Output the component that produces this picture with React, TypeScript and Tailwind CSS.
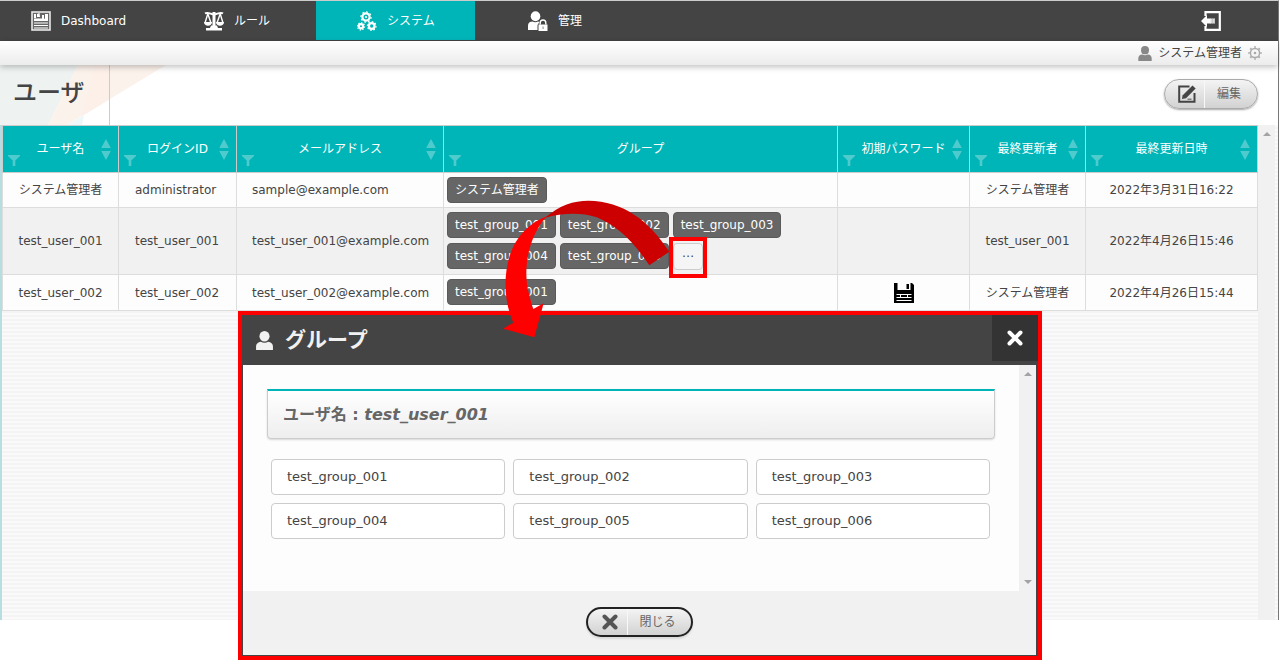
import React from "react";

type Column = { label: string; width: string; sortable: boolean };

const columns: Column[] = [
  { label: "ユーザ名", width: "w-[117px]", sortable: true },
  { label: "ログインID", width: "w-[118px]", sortable: true },
  { label: "メールアドレス", width: "w-[207px]", sortable: true },
  { label: "グループ", width: "", sortable: false },
  { label: "初期パスワード", width: "w-[132px]", sortable: true },
  { label: "最終更新者", width: "w-[116px]", sortable: true },
  { label: "最終更新日時", width: "w-[172px]", sortable: true },
];

type User = {
  name: string;
  login: string;
  mail: string;
  groups: string[];
  more?: boolean;
  password?: boolean;
  updatedBy: string;
  updatedAt: string;
  row: string;
};

const users: User[] = [
  {
    name: "システム管理者",
    login: "administrator",
    mail: "sample@example.com",
    groups: ["システム管理者"],
    updatedBy: "システム管理者",
    updatedAt: "2022年3月31日16:22",
    row: "h-[35px] bg-[#fdfdfd]",
  },
  {
    name: "test_user_001",
    login: "test_user_001",
    mail: "test_user_001@example.com",
    groups: ["test_group_001", "test_group_002", "test_group_003", "test_group_004", "test_group_005"],
    more: true,
    updatedBy: "test_user_001",
    updatedAt: "2022年4月26日15:46",
    row: "h-[67px] bg-[#f1f1f1]",
  },
  {
    name: "test_user_002",
    login: "test_user_002",
    mail: "test_user_002@example.com",
    groups: ["test_group_001"],
    password: true,
    updatedBy: "システム管理者",
    updatedAt: "2022年4月26日15:44",
    row: "h-[36px] bg-[#fdfdfd]",
  },
];

const modalGroups = [
  "test_group_001",
  "test_group_002",
  "test_group_003",
  "test_group_004",
  "test_group_005",
  "test_group_006",
];

function DashboardIcon() {
  return (
    <svg viewBox="0 0 20 20" className="size-5" fill="none">
      <rect x="1" y="1" width="18" height="18" fill="#666" stroke="#e8e8e8" strokeWidth="1.6" />
      <path d="M3 3h2v4H3zM6 3l2.500-1 .500 4H6zM11 4h2v5h-2zM14 3h3v6h-3z" fill="#fff" />
      <path d="M3 7.500h7L17 8v2H3z" fill="#fff" />
      <path d="M3 12h14M3 14.500h14M3 17h14" stroke="#fff" strokeWidth="1.1" />
    </svg>
  );
}

function ScalesIcon() {
  return (
    <svg viewBox="0 0 20 20" className="size-5" fill="none" stroke="#fff">
      <path d="M1 2.400c3-1.800 6 1 9 1s6-2.800 9-1" strokeWidth="2" />
      <path d="M10 1v16" strokeWidth="3" />
      <path d="M3.800 2.800L1 12M3.800 2.800L7 12M16.200 2.800L13 12M16.200 2.800L19 12" strokeWidth="1.400" />
      <path d="M0 11h8c0 5-8 5-8 0zM12 11h8c0 5-8 5-8 0z" fill="#fff" stroke="none" />
      <path d="M7 14.500h6l1 2.500h4v2.500H2V17h4z" fill="#fff" stroke="none" />
    </svg>
  );
}

function Cog({ x, y, r }: { x: number; y: number; r: number }) {
  return (
    <g>
      <circle cx={x} cy={y} r={r} strokeWidth="2.200" />
      <circle cx={x} cy={y} r={r + 1.5} strokeWidth="1.200" pathLength="32" strokeDasharray="2 2" />
    </g>
  );
}

function CogsIcon() {
  return (
    <svg viewBox="0 0 20 20" className="size-5" fill="none" stroke="#fff">
      <Cog x={9} y={6} r={3.6} />
      <circle cx="9" cy="6" r="1.100" fill="#fff" stroke="none" />
      <Cog x={4} y={15.3} r={2.1} />
      <Cog x={14.7} y={15} r={2.8} />
    </svg>
  );
}

function UserLockIcon() {
  return (
    <svg viewBox="0 0 20 20" className="size-5" fill="#fff">
      <ellipse cx="7.500" cy="5.200" rx="4.800" ry="5" />
      <path d="M0 19v-4.500c0-2.500 2-4 4.500-4 1.500 1 4 1 5.500 0l1.500.5-2 3v5z" />
      <path d="M10.500 13.500h9v6.500h-9z" />
      <path d="M12.200 13.500v-1.700a2.800 2.800 0 0 1 5.600 0v1.700" fill="none" stroke="#fff" strokeWidth="1.400" />
      <path d="M14.500 15.500h1.200v2.500h-1.200z" fill="#999" />
    </svg>
  );
}

function PersonIcon({ className }: { className: string }) {
  return (
    <svg viewBox="0 0 16 18" className={className} fill="currentColor">
      <ellipse cx="8" cy="5" rx="4.800" ry="5" />
      <path d="M0 18v-3.500C0 12 2 10.500 4.500 10.200c2 1.300 5 1.300 7 0C14 10.500 16 12 16 14.500V18z" />
    </svg>
  );
}

function LogoutIcon() {
  return (
    <svg viewBox="0 0 20 20" className="size-5">
      <path d="M4.500 5V1.200h14.300v17.600H4.500V15" fill="none" stroke="#fff" strokeWidth="2.200" />
      <path d="M0 10l6-6v3.500h4v5H6V16z" fill="#fff" />
      <path d="M9.500 7.500H14v5H9.500z" fill="#ddd" />
      <path d="M11.500 7.500v5M13.500 7.500v5" stroke="#bbb" strokeWidth="0.600" />
    </svg>
  );
}

function SettingsIcon() {
  return (
    <svg viewBox="0 0 14 14" className="size-[14px]" fill="none" stroke="#aaa">
      <circle cx="7" cy="7" r="4.600" strokeWidth="1.500" />
      <circle cx="7" cy="7" r="6" strokeWidth="1.400" pathLength="32" strokeDasharray="1.600 2.400" strokeDashoffset="0.800" />
      <circle cx="7" cy="7" r="1.300" fill="#aaa" stroke="none" />
    </svg>
  );
}

function EditIcon() {
  return (
    <svg viewBox="0 0 18 18" className="size-[18px]">
      <path d="M11.500 1.500H1.200v15.300h15.300V8" fill="none" stroke="#444" strokeWidth="2" />
      <path d="M4.500 10.500L14.500.5l3.200 3L8 13.300l-4 .8z" fill="#444" />
      <path d="M9.500 14.200h4" stroke="#666" strokeWidth="1.200" />
    </svg>
  );
}

function CrossIcon({ className }: { className: string }) {
  return (
    <svg viewBox="0 0 16 16" className={className} fill="none" stroke="currentColor" strokeWidth="4" strokeLinecap="round">
      <path d="M2.500 2.500l11 11M13.500 2.500l-11 11" />
    </svg>
  );
}

function SaveIcon() {
  return (
    <svg viewBox="0 0 20 20" className="mx-auto size-5">
      <path d="M0 0h3.500v7h13V0H18l2 2v18H0z" fill="#000" />
      <path d="M12.500 1H15v5h-2.500z" fill="#000" />
      <path d="M2.500 11.500h15M2.500 14.500h15M2.500 17.500h15" stroke="#fff" strokeWidth="1" />
      <path d="M6.500 11v4M13.500 11v4" stroke="#fff" strokeWidth="1" />
    </svg>
  );
}

function FilterIcon() {
  return (
    <svg viewBox="0 0 12 11" className="h-[11px] w-3" fill="#4fcbce">
      <path d="M0 0h12v1L7.300 5.500V11H4.700V5.500L0 1z" />
    </svg>
  );
}

function SortIcon() {
  return (
    <svg viewBox="0 0 10 21" className="h-[21px] w-[10px]" fill="#4fcbce">
      <path d="M5 0l4.800 9H.2zM.2 12h9.600L5 21z" />
    </svg>
  );
}

const navItems = [
  { label: "Dashboard", icon: <DashboardIcon />, className: "w-[158px] pl-[31px]" },
  { label: "ルール", icon: <ScalesIcon />, className: "w-[158px] pl-[46px]" },
  { label: "システム", icon: <CogsIcon />, className: "w-[159px] pl-[41px] bg-[#00b5b8]" },
  { label: "管理", icon: <UserLockIcon />, className: "w-[159px] pl-[53px]" },
];

function PillButton({ icon, label, className }: { icon: React.ReactNode; label: string; className: string }) {
  return (
    <button
      type="button"
      className={`flex h-[30px] items-stretch rounded-full bg-linear-to-b from-[#f4f4f4] to-[#d2d2d2] text-xs text-[#666] ${className}`}
    >
      <span className="flex w-10 items-center justify-center border-r border-[#f8f8f8] pl-1">{icon}</span>
      <span className="flex flex-1 items-center justify-center pr-1">{label}</span>
    </button>
  );
}

function GroupDialog() {
  return (
    <section
      role="dialog"
      aria-labelledby="dialog-title"
      className="absolute top-[311px] left-1/2 z-20 w-[804px] -translate-x-1/2 border-4 border-[#f00] bg-[#444]"
    >
      <header className="flex h-[50px] items-start justify-between text-white">
        <h2 id="dialog-title" className="flex h-[50px] items-center gap-3 pl-[14px] text-[21px] font-bold text-[#f1f1f1]">
          <PersonIcon className="h-[19px] w-[17px]" />
          グループ
        </h2>
        <button type="button" aria-label="ダイアログを閉じる" className="flex size-[46px] items-center justify-center bg-[#333]">
          <CrossIcon className="size-4" />
        </button>
      </header>
      <div className="mr-0.5 mb-px ml-px">
        <div className="flex h-[226px] bg-[#fdfdfd]">
          <div className="flex-1 px-6 pt-6">
            <h3 className="h-[50px] rounded-b border border-t-2 border-[#ccc] border-t-[#00b5b8] bg-linear-to-b from-white to-[#eee] pl-[15px] text-base leading-[48px] font-bold text-[#666] shadow-[0_1px_2px_rgba(0,0,0,0.15)]">
              ユーザ名 : <em>test_user_001</em>
            </h3>
            <ul className="mt-5 grid grid-cols-3 gap-2 pr-[5px] pl-1">
              {modalGroups.map((group) => (
                <li key={group} className="h-9 rounded border border-[#ccc] bg-white pl-[15px] text-[13px] leading-[34px]">
                  {group}
                </li>
              ))}
            </ul>
          </div>
          <div className="flex w-[17px] flex-col items-center justify-between bg-[#f1f1f1] py-[7px]">
            <svg viewBox="0 0 8 4" className="h-1 w-2" fill="#a3a3a3"><path d="M4 0l4 4H0z" /></svg>
            <svg viewBox="0 0 8 4" className="h-1 w-2" fill="#a3a3a3"><path d="M4 4l4-4H0z" /></svg>
          </div>
        </div>
        <footer className="flex h-16 items-center justify-center bg-[#f1f1f1] pb-0.5">
          <PillButton
            icon={<CrossIcon className="size-4 text-[#555]" />}
            label="閉じる"
            className="w-[107px] border-2 border-[#222] shadow-[0_2px_2px_rgba(0,0,0,0.1)]"
          />
        </footer>
      </div>
      <svg viewBox="210 84 516 420" className="pointer-events-none absolute -top-[117px] left-[258px] h-[140px] w-[172px]">
        <path
          d="M718 245L658 286C604 205 555 165 500 142C450 125 395 130 345 143C390 105 430 92 475 92C580 94 655 150 718 245z"
          fill="#c00"
        />
        <path
          d="M352 138C300 190 275 290 297 372C301 390 305 403 310 417L341 400L313 502L219 476L250 458C222 395 220 320 239 258C258 200 295 160 352 138z"
          fill="#f00"
        />
      </svg>
    </section>
  );
}

export default function App() {
  return (
    <div className="relative flex h-screen flex-col bg-white pb-10 font-['DejaVu_Sans','Noto_Sans_CJK_JP',sans-serif] text-xs text-[#444]">
      <div className="mr-px flex flex-1 flex-col border-t border-r border-t-[#ccc] border-r-[#777]">
        <nav className="flex h-10 items-stretch justify-between border-b border-[#444] bg-[#444] text-white">
          <div className="flex">
            {navItems.map((item) => (
              <a key={item.label} href="#" className={`flex items-center gap-[10px] ${item.className}`}>
                {item.icon}
                {item.label}
              </a>
            ))}
          </div>
          <button type="button" aria-label="ログアウト" className="mr-[57px]">
            <LogoutIcon />
          </button>
        </nav>

        <div className="relative z-10 flex h-6 items-center justify-end gap-[6px] bg-linear-to-b from-white to-[#ececec] pr-4 shadow-[0_2px_6px_rgba(0,0,0,0.25)]">
          <PersonIcon className="h-[15px] w-[14px] text-[#888]" />
          <span>システム管理者</span>
          <SettingsIcon />
        </div>

        <header className="flex h-[60px] items-start justify-between">
          <div className="relative h-full w-[170px]">
            <svg viewBox="0 0 170 60" className="absolute inset-0 h-full w-full">
              <path d="M0 0h78L48 60H0z" fill="#eef3f2" />
              <path d="M78 0h88L67 60H48z" fill="#fcf2ec" />
              <path d="M95 0h15v34L82 51z" fill="#fdf0e9" />
              <path d="M67 60l17-10-2 10z" fill="#eff8f8" />
              <path d="M109.500 0v60" stroke="#ccc" strokeWidth="1" />
            </svg>
            <h1 className="relative pt-[10px] pl-[13px] text-2xl leading-9 font-medium">ユーザ</h1>
          </div>
          <PillButton
            icon={<EditIcon />}
            label="編集"
            className="mt-[14px] mr-5 w-[94px] border border-[#aaa] shadow-[0_1px_2px_rgba(0,0,0,0.35)]"
          />
        </header>

        <main className="flex flex-1 items-stretch border-l-2 border-[#b5dde2] bg-[repeating-linear-gradient(#fafafa_0_2px,#f4f4f4_2px_4px)]">
          <div className="flex-1">
            <table className="w-full table-fixed border-separate border-spacing-0">
              <thead>
                <tr className="h-12 bg-[#00b5b8] text-white">
                  {columns.map((column) => (
                    <th
                      key={column.label}
                      className={`border-t border-r border-b border-[#ccc] p-0 font-normal first:border-l ${column.width}`}
                    >
                      <div className="flex h-[46px] items-center px-[5px]">
                        <span className="self-end pb-[6px]">
                          <FilterIcon />
                        </span>
                        <span className="flex-1 text-center whitespace-nowrap">{column.label}</span>
                        <span className="w-3">{column.sortable && <SortIcon />}</span>
                      </div>
                    </th>
                  ))}
                </tr>
              </thead>
              <tbody className="[&_td]:border-r [&_td]:border-b [&_td]:border-[#ddd] [&_td]:p-0 [&_td:first-child]:border-l">
                {users.map((user) => (
                  <tr key={user.name} className={user.row}>
                    <td className="text-center">{user.name}</td>
                    <td>
                      <div className="pl-4">{user.login}</div>
                    </td>
                    <td>
                      <div className="pl-[15px]">{user.mail}</div>
                    </td>
                    <td>
                      <ul className="flex max-w-[360px] flex-wrap gap-x-1 gap-y-[5px] pb-px pl-[3px]">
                        {user.groups.map((group) => (
                          <li
                            key={group}
                            className="h-[26px] rounded border border-[#5a5a5a] bg-[#666] px-[7px] leading-6 text-white"
                          >
                            {group}
                          </li>
                        ))}
                        {user.more && (
                          <li className="relative">
                            <button
                              type="button"
                              aria-label="すべてのグループを表示"
                              className="block h-[27px] w-[30px] rounded border border-[#ccc] bg-[#f5f5f5] text-center leading-6"
                            >
                              ⋯
                            </button>
                            <span className="pointer-events-none absolute -inset-x-1 -top-[6px] -bottom-2 border-4 border-[#f00]" />
                          </li>
                        )}
                      </ul>
                    </td>
                    <td>{user.password && <SaveIcon />}</td>
                    <td className="text-center">{user.updatedBy}</td>
                    <td className="text-center">{user.updatedAt}</td>
                  </tr>
                ))}
              </tbody>
            </table>
          </div>
          <div className="mr-[3px] flex w-[17px] justify-center bg-[#f1f1f1] pt-[7px]">
            <svg viewBox="0 0 8 4" className="h-1 w-2" fill="#a3a3a3"><path d="M4 0l4 4H0z" /></svg>
          </div>
        </main>
      </div>
      <GroupDialog />
    </div>
  );
}
